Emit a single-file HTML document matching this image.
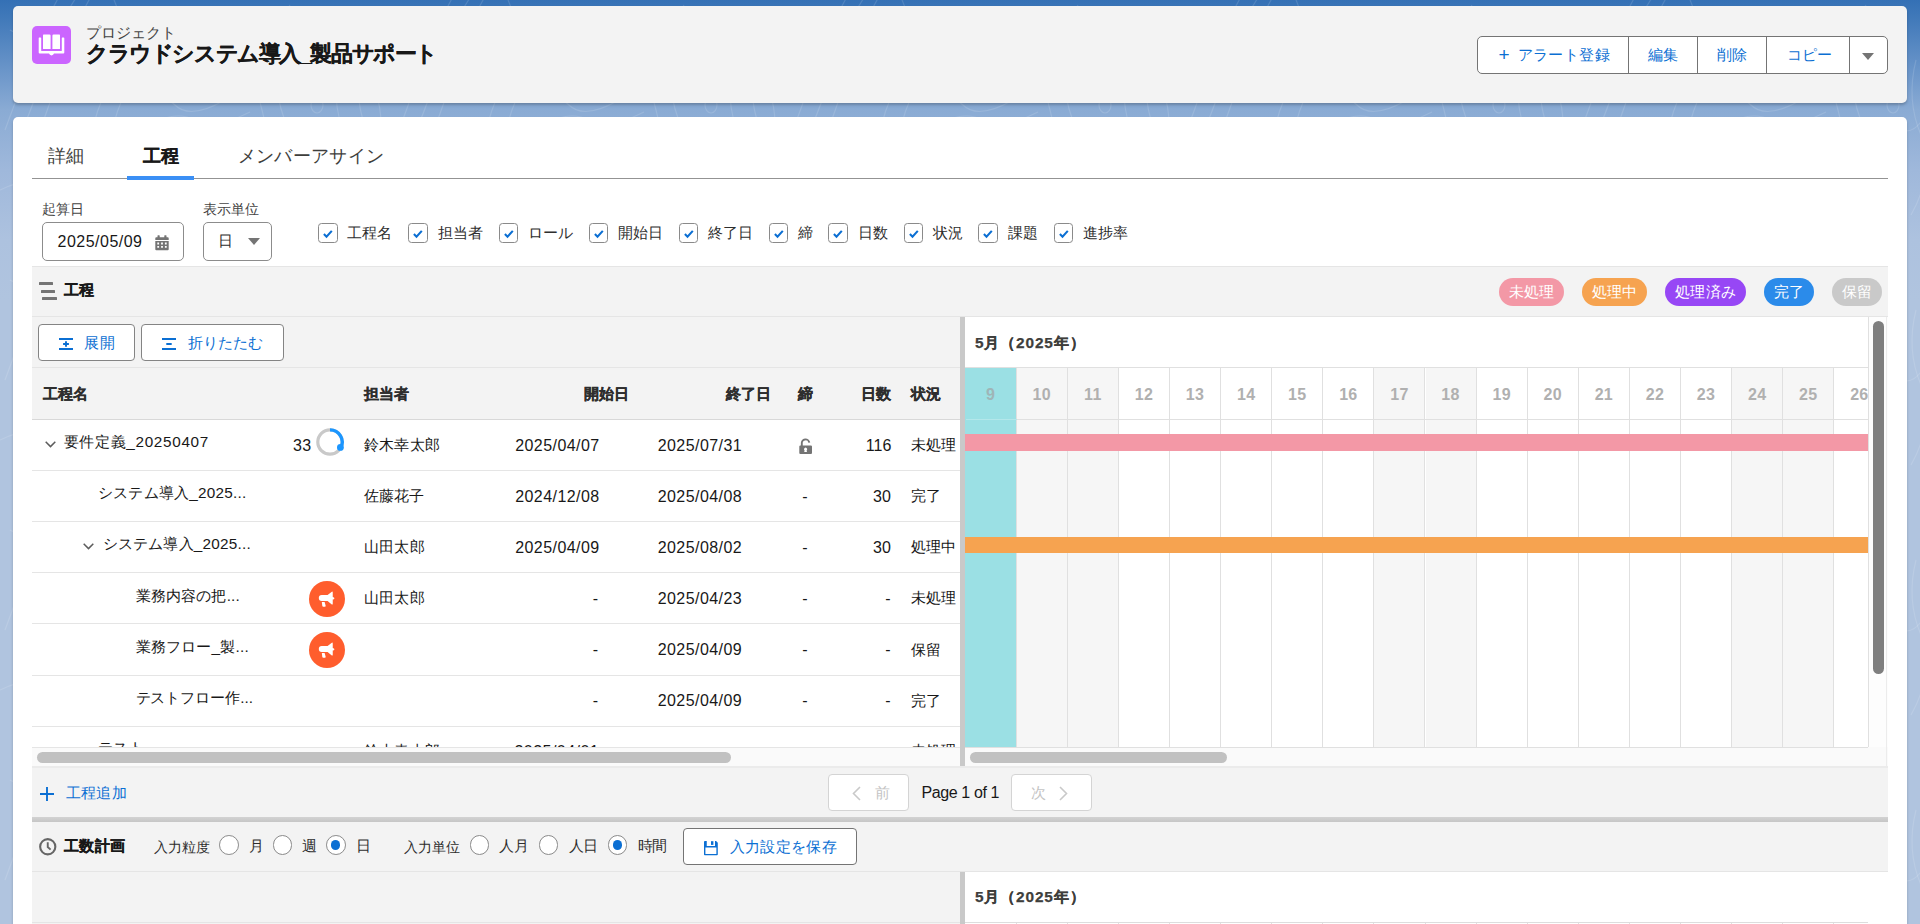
<!DOCTYPE html>
<html lang="ja">
<head>
<meta charset="utf-8">
<title>プロジェクト</title>
<style>
*{box-sizing:border-box;margin:0;padding:0}
html,body{width:1920px;height:924px;overflow:hidden}
body{font-family:"Liberation Sans",sans-serif;color:#181818;font-size:15px;position:relative;
background:linear-gradient(to bottom,#3470b5 0px,#427aba 20px,#6a95c9 70px,#8aabd4 110px,#9fb8db 170px,#adc2df 240px,#b0c4df 300px,#b0c4df 924px)}
.a{position:absolute}
.t{position:absolute;white-space:nowrap;line-height:1}
svg{position:absolute;overflow:visible}
</style>
</head>
<body>
<svg style="left:0;top:0" width="1920" height="924"><defs><pattern id="tp" width="394" height="250" patternUnits="userSpaceOnUse">
<g fill="none" stroke="#fff" stroke-opacity=".13" stroke-width="1.1">
<path d="M5 130Q20 90 30 60T60 -5M20 135Q38 95 46 62T78 -5M36 140Q52 100 62 64T92 -5"/>
<path d="M95 20Q120 60 100 105T135 180Q170 200 160 250M112 -5Q140 60 120 105T150 170"/>
<path d="M130 100Q160 90 175 105T225 100Q240 85 232 60M150 125Q175 110 195 120T250 112"/>
<path d="M262 20Q250 70 262 110T250 200M280 30Q270 80 284 118T270 210"/>
<ellipse cx="317" cy="105" rx="6" ry="8"/><path d="M300 130Q310 120 322 128T345 122"/>
<path d="M340 60Q330 100 345 135T335 215M360 40Q352 90 366 130T352 230M378 100Q386 130 372 170"/>
<path d="M180 150Q215 125 245 150T270 230M0 190Q40 170 70 195T130 215"/>
<path d="M200 30Q220 10 245 25T290 5M10 30Q35 45 60 30"/>
</g></pattern></defs><rect width="1920" height="924" fill="url(#tp)"/></svg>
<div class="a" style="left:13.2px;top:6px;width:1893.6px;height:96.5px;background:#f3f3f3;border-radius:5px;box-shadow:0 2px 3px rgba(0,0,0,.22);"></div>
<div class="a" style="left:13.2px;top:117.3px;width:1893.6px;height:820px;background:#fff;border-radius:5px;box-shadow:0 2px 3px rgba(0,0,0,.2);"></div>
<div class="a" style="left:32px;top:26px;width:39px;height:38px;background:#cb65ff;border-radius:5px;"></div>
<svg style="left:38px;top:34px" width="27" height="22" viewBox="0 0 27 22">
<path fill="#fff" d="M5 1.2Q5 .6 5.6 .6H11.4Q12.6 .6 12.6 1.8V15H5.6Q5 15 5 14.4Z"/>
<path fill="#fff" d="M14.4 1.8Q14.4 .6 15.6 .6H21.4Q22 .6 22 1.2V14.4Q22 15 21.4 15H14.4Z"/>
<path fill="#fff" d="M1.2 3.5H2.6Q3.2 3.5 3.2 4.1V16.4Q3.2 17 3.8 17H23.2Q23.8 17 23.8 16.4V4.1Q23.8 3.5 24.4 3.5H25.6Q26.3 3.5 26.3 4.2V18.6Q26.3 19.6 25.3 19.6H16Q15.4 21.4 13.5 21.4Q11.6 21.4 11 19.6H1.7Q.7 19.6 .7 18.6V4.2Q.7 3.5 1.2 3.5Z"/>
</svg>
<div class="t" style="top:25.9px;font-size:14.8px;left:86px;color:#444;letter-spacing:0.083px;">プロジェクト</div>
<div class="t" style="top:44.45px;font-size:21.5px;left:86px;font-weight:bold;-webkit-text-stroke:.25px;letter-spacing:-1.41px;">クラウドシステム導入_製品サポート</div>
<div class="a" style="left:1477px;top:36px;width:411px;height:37.5px;background:#fff;border:1px solid #747474;border-radius:5px;"></div>
<div class="a" style="left:1628px;top:37px;width:1px;height:35.5px;background:#747474;"></div>
<div class="a" style="left:1697px;top:37px;width:1px;height:35.5px;background:#747474;"></div>
<div class="a" style="left:1766px;top:37px;width:1px;height:35.5px;background:#747474;"></div>
<div class="a" style="left:1849px;top:37px;width:1px;height:35.5px;background:#747474;"></div>
<div class="t" style="top:44.7px;font-size:19px;left:1498.5px;color:#0b6fd3;">+</div>
<div class="t" style="top:47.05px;font-size:15.3px;left:1517.5px;color:#0b6fd3;letter-spacing:0.417px;">アラート登録</div>
<div class="t" style="top:47.05px;font-size:15.3px;left:1647.6px;color:#0b6fd3;letter-spacing:0.3px;">編集</div>
<div class="t" style="top:47.05px;font-size:15.3px;left:1716.8px;color:#0b6fd3;letter-spacing:0.4px;">削除</div>
<div class="t" style="top:47.05px;font-size:15.3px;left:1787px;color:#0b6fd3;letter-spacing:0.167px;">コピー</div>
<div class="a" style="left:1862px;top:53px;width:0;height:0;border-left:6.2px solid transparent;border-right:6.2px solid transparent;border-top:7px solid #747474"></div>
<div class="a" style="left:32px;top:178px;width:1856px;height:1px;background:#939393;"></div>
<div class="t" style="top:147.0px;font-size:18px;left:47.5px;color:#3e3e3c;letter-spacing:0.4px;">詳細</div>
<div class="t" style="top:147.0px;font-size:18px;left:142.5px;font-weight:bold;-webkit-text-stroke:.25px;letter-spacing:0.5px;">工程</div>
<div class="a" style="left:127.3px;top:176.1px;width:66.8px;height:3.8px;background:#3a8ff5;"></div>
<div class="t" style="top:146.5px;font-size:18px;left:237.5px;color:#3e3e3c;letter-spacing:0.375px;">メンバーアサイン</div>
<div class="t" style="top:201.5px;font-size:14px;left:42px;color:#444;">起算日</div>
<div class="t" style="top:201.5px;font-size:14px;left:202.5px;color:#444;letter-spacing:0.125px;">表示単位</div>
<div class="a" style="left:42px;top:222px;width:142px;height:38.5px;background:#fff;border:1px solid #8c8c8c;border-radius:5px;"></div>
<div class="t" style="top:234.3px;font-size:16px;left:57.5px;letter-spacing:0.492px;">2025/05/09</div>
<svg style="left:154.5px;top:234.8px" width="14" height="15.5" viewBox="0 0 14 15.5">
<path fill="#747474" d="M3 .3h1.2q.5 0 .5.5V2.2h4.6V.8q0-.5.5-.5H11q.5 0 .5.5V2.2h1.2q1 0 1 1V4.9H.3V3.2q0-1 1-1H2.5V.8q0-.5.5-.5Z"/>
<path fill="#747474" fill-rule="evenodd" d="M.3 6H13.7V14.2q0 1-1 1H1.3q-1 0-1-1ZM2.3 7.6V9.4H4.1V7.6ZM6.1 7.6V9.4H7.9V7.6ZM9.9 7.6V9.4H11.7V7.6ZM2.3 11V12.8H4.1V11ZM6.1 11V12.8H7.9V11ZM9.9 11V12.8H11.7V11Z"/>
</svg>
<div class="a" style="left:203px;top:222px;width:69px;height:38.5px;background:#fff;border:1px solid #8c8c8c;border-radius:5px;"></div>
<div class="t" style="top:233.0px;font-size:15px;left:218.3px;color:#2e2e2e;letter-spacing:-1.5px;">日</div>
<div class="a" style="left:247.7px;top:238px;width:0;height:0;border-left:6px solid transparent;border-right:6px solid transparent;border-top:7px solid #747474"></div>
<div class="a" style="left:318px;top:223.2px;width:19.5px;height:19.5px;background:#fff;border:1px solid #8a8a8a;border-radius:3.5px;"></div>
<svg style="left:322.9px;top:229.6px" width="9.6" height="8" viewBox="0 0 9.6 8"><path d="M.9 4.1 3.5 6.7 8.8 .9" fill="none" stroke="#0b6fd3" stroke-width="2.1"/></svg>
<div class="t" style="top:225.0px;font-size:15px;left:347px;color:#2e2e2e;letter-spacing:0.167px;">工程名</div>
<div class="a" style="left:408.2px;top:223.2px;width:19.5px;height:19.5px;background:#fff;border:1px solid #8a8a8a;border-radius:3.5px;"></div>
<svg style="left:413.09999999999997px;top:229.6px" width="9.6" height="8" viewBox="0 0 9.6 8"><path d="M.9 4.1 3.5 6.7 8.8 .9" fill="none" stroke="#0b6fd3" stroke-width="2.1"/></svg>
<div class="t" style="top:225.0px;font-size:15px;left:437.5px;color:#2e2e2e;letter-spacing:0.167px;">担当者</div>
<div class="a" style="left:498.7px;top:223.2px;width:19.5px;height:19.5px;background:#fff;border:1px solid #8a8a8a;border-radius:3.5px;"></div>
<svg style="left:503.59999999999997px;top:229.6px" width="9.6" height="8" viewBox="0 0 9.6 8"><path d="M.9 4.1 3.5 6.7 8.8 .9" fill="none" stroke="#0b6fd3" stroke-width="2.1"/></svg>
<div class="t" style="top:225.0px;font-size:15px;left:528px;color:#2e2e2e;letter-spacing:-0.167px;">ロール</div>
<div class="a" style="left:588.7px;top:223.2px;width:19.5px;height:19.5px;background:#fff;border:1px solid #8a8a8a;border-radius:3.5px;"></div>
<svg style="left:593.6px;top:229.6px" width="9.6" height="8" viewBox="0 0 9.6 8"><path d="M.9 4.1 3.5 6.7 8.8 .9" fill="none" stroke="#0b6fd3" stroke-width="2.1"/></svg>
<div class="t" style="top:225.0px;font-size:15px;left:617.5px;color:#2e2e2e;letter-spacing:0.167px;">開始日</div>
<div class="a" style="left:678.7px;top:223.2px;width:19.5px;height:19.5px;background:#fff;border:1px solid #8a8a8a;border-radius:3.5px;"></div>
<svg style="left:683.6px;top:229.6px" width="9.6" height="8" viewBox="0 0 9.6 8"><path d="M.9 4.1 3.5 6.7 8.8 .9" fill="none" stroke="#0b6fd3" stroke-width="2.1"/></svg>
<div class="t" style="top:225.0px;font-size:15px;left:707.5px;color:#2e2e2e;letter-spacing:0.167px;">終了日</div>
<div class="a" style="left:768.7px;top:223.2px;width:19.5px;height:19.5px;background:#fff;border:1px solid #8a8a8a;border-radius:3.5px;"></div>
<svg style="left:773.6px;top:229.6px" width="9.6" height="8" viewBox="0 0 9.6 8"><path d="M.9 4.1 3.5 6.7 8.8 .9" fill="none" stroke="#0b6fd3" stroke-width="2.1"/></svg>
<div class="t" style="top:225.0px;font-size:15px;left:798px;color:#2e2e2e;letter-spacing:0.2px;">締</div>
<div class="a" style="left:828.3px;top:223.2px;width:19.5px;height:19.5px;background:#fff;border:1px solid #8a8a8a;border-radius:3.5px;"></div>
<svg style="left:833.1999999999999px;top:229.6px" width="9.6" height="8" viewBox="0 0 9.6 8"><path d="M.9 4.1 3.5 6.7 8.8 .9" fill="none" stroke="#0b6fd3" stroke-width="2.1"/></svg>
<div class="t" style="top:225.0px;font-size:15px;left:858px;color:#2e2e2e;letter-spacing:0.15px;">日数</div>
<div class="a" style="left:903.7px;top:223.2px;width:19.5px;height:19.5px;background:#fff;border:1px solid #8a8a8a;border-radius:3.5px;"></div>
<svg style="left:908.6px;top:229.6px" width="9.6" height="8" viewBox="0 0 9.6 8"><path d="M.9 4.1 3.5 6.7 8.8 .9" fill="none" stroke="#0b6fd3" stroke-width="2.1"/></svg>
<div class="t" style="top:225.0px;font-size:15px;left:933px;color:#2e2e2e;letter-spacing:0.15px;">状況</div>
<div class="a" style="left:978px;top:223.2px;width:19.5px;height:19.5px;background:#fff;border:1px solid #8a8a8a;border-radius:3.5px;"></div>
<svg style="left:982.9px;top:229.6px" width="9.6" height="8" viewBox="0 0 9.6 8"><path d="M.9 4.1 3.5 6.7 8.8 .9" fill="none" stroke="#0b6fd3" stroke-width="2.1"/></svg>
<div class="t" style="top:225.0px;font-size:15px;left:1007.5px;color:#2e2e2e;letter-spacing:0.25px;">課題</div>
<div class="a" style="left:1053.7px;top:223.2px;width:19.5px;height:19.5px;background:#fff;border:1px solid #8a8a8a;border-radius:3.5px;"></div>
<svg style="left:1058.6000000000001px;top:229.6px" width="9.6" height="8" viewBox="0 0 9.6 8"><path d="M.9 4.1 3.5 6.7 8.8 .9" fill="none" stroke="#0b6fd3" stroke-width="2.1"/></svg>
<div class="t" style="top:225.0px;font-size:15px;left:1082.5px;color:#2e2e2e;letter-spacing:0.167px;">進捗率</div>
<div class="a" style="left:32px;top:266px;width:1856px;height:660px;background:#f3f3f3;"></div>
<div class="a" style="left:32px;top:266px;width:1856px;height:1px;background:#e5e5e5;"></div>
<div class="a" style="left:39.2px;top:282.1px;width:14.2px;height:3.2px;background:#747474;border-radius:0.5px;"></div>
<div class="a" style="left:40.9px;top:289.8px;width:14.1px;height:3.2px;background:#747474;border-radius:0.5px;"></div>
<div class="a" style="left:42px;top:296.9px;width:14.8px;height:3.2px;background:#747474;border-radius:0.5px;"></div>
<div class="t" style="top:282.4px;font-size:15.2px;left:64px;font-weight:bold;-webkit-text-stroke:.25px;letter-spacing:0.25px;">工程</div>
<div class="a" style="left:1498.5px;top:278px;width:65.5px;height:28px;background:#f398a6;border-radius:14px;"></div>
<div class="t" style="top:283.9px;font-size:15.2px;left:1508.5px;color:#fff;letter-spacing:0.267px;">未処理</div>
<div class="a" style="left:1581.5px;top:278px;width:65.5px;height:28px;background:#f6a350;border-radius:14px;"></div>
<div class="t" style="top:283.9px;font-size:15.2px;left:1591.5px;color:#fff;letter-spacing:0.267px;">処理中</div>
<div class="a" style="left:1665px;top:278px;width:80.5px;height:28px;background:#9747f5;border-radius:14px;"></div>
<div class="t" style="top:283.9px;font-size:15.2px;left:1675px;color:#fff;letter-spacing:0.25px;">処理済み</div>
<div class="a" style="left:1763.5px;top:278px;width:50px;height:28px;background:#2b8bea;border-radius:14px;"></div>
<div class="t" style="top:283.9px;font-size:15.2px;left:1773.5px;color:#fff;letter-spacing:0.25px;">完了</div>
<div class="a" style="left:1831.5px;top:278px;width:50px;height:28px;background:#c9c9c9;border-radius:14px;"></div>
<div class="t" style="top:283.9px;font-size:15.2px;left:1841.5px;color:#fff;letter-spacing:0.25px;">保留</div>
<div class="a" style="left:32px;top:316px;width:1856px;height:1px;background:#e5e5e5;"></div>
<div class="a" style="left:38px;top:324px;width:96.6px;height:36.6px;background:#fff;border:1px solid #848484;border-radius:4px;"></div>
<svg style="left:59.3px;top:338.1px" width="14" height="12" viewBox="0 0 14 12" fill="none" stroke="#0b6fd3" stroke-width="2">
<path d="M0 1H14M0 11H14"/><path d="M7 3.2V8.8M4.1 6H9.9" stroke-width="1.9"/></svg>
<div class="t" style="top:334.85px;font-size:15.3px;left:84px;color:#0b6fd3;letter-spacing:0.5px;">展開</div>
<div class="a" style="left:141px;top:324px;width:142.6px;height:36.6px;background:#fff;border:1px solid #848484;border-radius:4px;"></div>
<svg style="left:162px;top:338.1px" width="14" height="12" viewBox="0 0 14 12" fill="none" stroke="#0b6fd3" stroke-width="2">
<path d="M0 1H14M0 11H14M4.3 6H9.7"/></svg>
<div class="t" style="top:334.85px;font-size:15.3px;left:187.5px;color:#0b6fd3;letter-spacing:0.2px;">折りたたむ</div>
<div class="a" style="left:32px;top:367px;width:928px;height:1px;background:#e5e5e5;"></div>
<div class="a" style="left:32px;top:419px;width:928px;height:1px;background:#d8d8d8;"></div>
<div class="t" style="top:386.4px;font-size:15.2px;left:42.5px;font-weight:bold;-webkit-text-stroke:.25px;color:#2e2e2e;letter-spacing:0.167px;">工程名</div>
<div class="t" style="top:386.4px;font-size:15.2px;left:363.5px;font-weight:bold;-webkit-text-stroke:.25px;color:#2e2e2e;letter-spacing:0.267px;">担当者</div>
<div class="t" style="top:386.4px;font-size:15.2px;left:583.5px;font-weight:bold;-webkit-text-stroke:.25px;color:#2e2e2e;letter-spacing:0.167px;">開始日</div>
<div class="t" style="top:386.4px;font-size:15.2px;left:726px;font-weight:bold;-webkit-text-stroke:.25px;color:#2e2e2e;letter-spacing:0.167px;">終了日</div>
<div class="t" style="top:386.4px;font-size:15.2px;left:798px;font-weight:bold;-webkit-text-stroke:.25px;color:#2e2e2e;letter-spacing:0.3px;">締</div>
<div class="t" style="top:386.4px;font-size:15.2px;left:861px;font-weight:bold;-webkit-text-stroke:.25px;color:#2e2e2e;letter-spacing:0.15px;">日数</div>
<div class="t" style="top:386.4px;font-size:15.2px;left:910.5px;font-weight:bold;-webkit-text-stroke:.25px;color:#2e2e2e;letter-spacing:0.15px;">状況</div>
<div class="a" style="left:32px;top:420px;width:928px;height:327px;background:#fff;"></div>
<div class="a" style="left:32px;top:470.1px;width:928px;height:1px;background:#e5e5e5;"></div>
<div class="a" style="left:32px;top:520.9px;width:928px;height:1px;background:#e5e5e5;"></div>
<div class="a" style="left:32px;top:571.8px;width:928px;height:1px;background:#e5e5e5;"></div>
<div class="a" style="left:32px;top:622.9px;width:928px;height:1px;background:#e5e5e5;"></div>
<div class="a" style="left:32px;top:675.0px;width:928px;height:1px;background:#e5e5e5;"></div>
<div class="a" style="left:32px;top:725.9px;width:928px;height:1px;background:#e5e5e5;"></div>
<svg style="left:44.5px;top:440.5px" width="11" height="7" viewBox="0 0 11 7"><path d="M.7 .8 5.5 5.6 10.3 .8" fill="none" stroke="#5c5c5c" stroke-width="1.5"/></svg>
<div class="t" style="top:433.95px;font-size:15.3px;left:63.5px;letter-spacing:0.686px;">要件定義_20250407</div>
<div class="t" style="top:437.9px;font-size:16px;left:293px;letter-spacing:0.352px;">33</div>
<svg style="left:316.2px;top:428px" width="28" height="28" viewBox="0 0 28 28" fill="none">
<circle cx="14" cy="14" r="12.2" stroke="#c9c9c9" stroke-width="3.2"/>
<path d="M14 1.8A12.2 12.2 0 0 1 24.69 19.88" stroke="#1b96ff" stroke-width="3.3"/>
<circle cx="24.4" cy="19.4" r="3.4" fill="#1b96ff"/></svg>
<div class="t" style="top:437.35px;font-size:15.3px;left:363.5px;letter-spacing:0.4px;">鈴木幸太郎</div>
<div class="t" style="top:437.9px;font-size:16px;right:1320.3px;letter-spacing:.45px;">2025/04/07</div>
<div class="t" style="top:437.9px;font-size:16px;right:1177.8px;letter-spacing:.45px;">2025/07/31</div>
<svg style="left:799px;top:439px" width="13.5" height="15.5" viewBox="0 0 13.5 15.5">
<path d="M2.8 7V4.7A3.75 3.75 0 0 1 10.3 3.7" fill="none" stroke="#747474" stroke-width="1.9"/>
<path fill="#747474" fill-rule="evenodd" d="M1.4 6.5H11.9Q13 6.5 13 7.6V13.9Q13 15 11.9 15H1.4Q.3 15 .3 13.9V7.6Q.3 6.5 1.4 6.5ZM6.6 8.4A1.8 1.8 0 0 0 5.6 11.5L5.2 13H8L7.6 11.5A1.8 1.8 0 0 0 6.6 8.4Z"/></svg>
<div class="t" style="top:437.9px;font-size:16px;right:1028.7px;">116</div>
<div class="t" style="top:437.35px;font-size:15.3px;left:910.5px;letter-spacing:0.333px;">未処理</div>
<div class="t" style="top:484.95px;font-size:15.3px;left:98px;letter-spacing:0.229px;">システム導入_2025...</div>
<div class="t" style="top:488.15px;font-size:15.3px;left:363.5px;letter-spacing:0.25px;">佐藤花子</div>
<div class="t" style="top:488.7px;font-size:16px;right:1320.3px;letter-spacing:.45px;">2024/12/08</div>
<div class="t" style="top:488.7px;font-size:16px;right:1177.8px;letter-spacing:.45px;">2025/04/08</div>
<div class="t" style="top:488.7px;font-size:16px;left:802.3px;">-</div>
<div class="t" style="top:488.7px;font-size:16px;right:1028.7px;letter-spacing:.3px;">30</div>
<div class="t" style="top:488.15px;font-size:15.3px;left:910.5px;letter-spacing:0.25px;">完了</div>
<svg style="left:82.5px;top:542.5px" width="11" height="7" viewBox="0 0 11 7"><path d="M.7 .8 5.5 5.6 10.3 .8" fill="none" stroke="#5c5c5c" stroke-width="1.5"/></svg>
<div class="t" style="top:536.35px;font-size:15.3px;left:102.5px;letter-spacing:0.229px;">システム導入_2025...</div>
<div class="t" style="top:539.15px;font-size:15.3px;left:363.5px;letter-spacing:0.375px;">山田太郎</div>
<div class="t" style="top:539.7px;font-size:16px;right:1320.3px;letter-spacing:.45px;">2025/04/09</div>
<div class="t" style="top:539.7px;font-size:16px;right:1177.8px;letter-spacing:.45px;">2025/08/02</div>
<div class="t" style="top:539.7px;font-size:16px;left:802.3px;">-</div>
<div class="t" style="top:539.7px;font-size:16px;right:1028.7px;letter-spacing:.3px;">30</div>
<div class="t" style="top:539.15px;font-size:15.3px;left:910.5px;letter-spacing:0.333px;">処理中</div>
<div class="t" style="top:587.55px;font-size:15.3px;left:135.5px;letter-spacing:0.194px;">業務内容の把...</div>
<svg style="left:308.6px;top:580.6px" width="36" height="36" viewBox="0 0 36 36">
<circle cx="18" cy="18" r="18" fill="#ff5d2d"/>
<path fill="#fff" d="M12.7 14H18.6L22.5 10.9Q23.75 10.1 23.75 11.5V15.9Q25.4 16 25.4 17.25Q25.4 18.5 23.75 18.6V22.7Q23.75 24.1 22.5 23.2L18.6 19.9H12.7Q9.8 19.9 9.8 16.95Q9.8 14 12.7 14Z"/>
<path fill="#fff" d="M12.8 20.9H15.6L16.6 24.5Q16.9 25.7 15.8 25.7H14.3Q13.5 25.7 13.3 24.9Z"/></svg>
<div class="t" style="top:590.35px;font-size:15.3px;left:363.5px;letter-spacing:0.375px;">山田太郎</div>
<div class="t" style="top:590.9px;font-size:16px;left:592.7px;">-</div>
<div class="t" style="top:590.9px;font-size:16px;right:1177.8px;letter-spacing:.45px;">2025/04/23</div>
<div class="t" style="top:590.9px;font-size:16px;left:802.3px;">-</div>
<div class="t" style="top:590.9px;font-size:16px;left:885.3px;">-</div>
<div class="t" style="top:590.35px;font-size:15.3px;left:910.5px;letter-spacing:0.333px;">未処理</div>
<div class="t" style="top:638.65px;font-size:15.3px;left:135.5px;letter-spacing:0.223px;">業務フロー_製...</div>
<svg style="left:308.6px;top:631.7px" width="36" height="36" viewBox="0 0 36 36">
<circle cx="18" cy="18" r="18" fill="#ff5d2d"/>
<path fill="#fff" d="M12.7 14H18.6L22.5 10.9Q23.75 10.1 23.75 11.5V15.9Q25.4 16 25.4 17.25Q25.4 18.5 23.75 18.6V22.7Q23.75 24.1 22.5 23.2L18.6 19.9H12.7Q9.8 19.9 9.8 16.95Q9.8 14 12.7 14Z"/>
<path fill="#fff" d="M12.8 20.9H15.6L16.6 24.5Q16.9 25.7 15.8 25.7H14.3Q13.5 25.7 13.3 24.9Z"/></svg>
<div class="t" style="top:642.1px;font-size:16px;left:592.7px;">-</div>
<div class="t" style="top:642.1px;font-size:16px;right:1177.8px;letter-spacing:.45px;">2025/04/09</div>
<div class="t" style="top:642.1px;font-size:16px;left:802.3px;">-</div>
<div class="t" style="top:642.1px;font-size:16px;left:885.3px;">-</div>
<div class="t" style="top:641.55px;font-size:15.3px;left:910.5px;letter-spacing:0.25px;">保留</div>
<div class="t" style="top:689.85px;font-size:15.3px;left:135.5px;letter-spacing:-0.025px;">テストフロー作...</div>
<div class="t" style="top:693.2px;font-size:16px;left:592.7px;">-</div>
<div class="t" style="top:693.2px;font-size:16px;right:1177.8px;letter-spacing:.45px;">2025/04/09</div>
<div class="t" style="top:693.2px;font-size:16px;left:802.3px;">-</div>
<div class="t" style="top:693.2px;font-size:16px;left:885.3px;">-</div>
<div class="t" style="top:692.65px;font-size:15.3px;left:910.5px;letter-spacing:0.25px;">完了</div>
<div class="a" style="left:32px;top:726.5px;width:928px;height:20.5px;overflow:hidden">
<div class="t" style="top:13.95px;font-size:15.3px;left:66px;letter-spacing:0.333px;">テスト</div>
<div class="t" style="top:16.85px;font-size:15.3px;left:331.5px;letter-spacing:0.4px;">鈴木幸太郎</div>
<div class="t" style="top:17.5px;font-size:16px;left:567.3px;left:482.5px;right:auto;letter-spacing:.45px;">2025/04/01</div>
<div class="t" style="top:16.85px;font-size:15.3px;left:878.5px;letter-spacing:0.333px;">未処理</div>
</div>
<div class="a" style="left:32px;top:747px;width:928px;height:19.5px;background:#fafafa;"></div>
<div class="a" style="left:32px;top:747px;width:928px;height:1px;background:#e5e5e5;"></div>
<div class="a" style="left:36.5px;top:752px;width:694.5px;height:11px;background:#c1c1c1;border-radius:5.5px;"></div>
<div class="a" style="left:960px;top:316.5px;width:5px;height:450px;background:#c9c9c9;"></div>
<div class="a" style="left:965px;top:317px;width:923px;height:449.5px;background:#fff;"></div>
<div class="a" style="left:1868px;top:317px;width:20px;height:449.5px;background:#fdfdfd;"></div>
<div class="a" style="left:965px;top:747px;width:923px;height:19.5px;background:#fafafa;"></div>
<div class="a" style="left:1886.2px;top:317px;width:1.3px;height:449.5px;background:#ececec;"></div>
<div class="t" style="top:334.8px;font-size:15.4px;left:975px;font-weight:bold;-webkit-text-stroke:.25px;color:#3e3e3c;letter-spacing:0.854px;">5月（2025年）</div>
<div class="a" style="left:965px;top:367px;width:903px;height:1px;background:#e0e0e0;"></div>
<div class="a" style="left:965px;top:368px;width:903px;height:379px;overflow:hidden">
<div class="a" style="left:0.6px;top:0;width:51.1px;height:379px;background:#9be0e4;border-right:1px solid #e0e0e0"></div>
<div class="a" style="left:51.7px;top:0;width:51.1px;height:379px;background:#f6f6f6;border-right:1px solid #e0e0e0"></div>
<div class="a" style="left:102.8px;top:0;width:51.1px;height:379px;background:#f6f6f6;border-right:1px solid #e0e0e0"></div>
<div class="a" style="left:153.9px;top:0;width:51.1px;height:379px;background:#fff;border-right:1px solid #e0e0e0"></div>
<div class="a" style="left:205.0px;top:0;width:51.1px;height:379px;background:#fff;border-right:1px solid #e0e0e0"></div>
<div class="a" style="left:256.1px;top:0;width:51.1px;height:379px;background:#fff;border-right:1px solid #e0e0e0"></div>
<div class="a" style="left:307.2px;top:0;width:51.1px;height:379px;background:#fff;border-right:1px solid #e0e0e0"></div>
<div class="a" style="left:358.3px;top:0;width:51.1px;height:379px;background:#fff;border-right:1px solid #e0e0e0"></div>
<div class="a" style="left:409.4px;top:0;width:51.1px;height:379px;background:#f6f6f6;border-right:1px solid #e0e0e0"></div>
<div class="a" style="left:460.5px;top:0;width:51.1px;height:379px;background:#f6f6f6;border-right:1px solid #e0e0e0"></div>
<div class="a" style="left:511.6px;top:0;width:51.1px;height:379px;background:#fff;border-right:1px solid #e0e0e0"></div>
<div class="a" style="left:562.7px;top:0;width:51.1px;height:379px;background:#fff;border-right:1px solid #e0e0e0"></div>
<div class="a" style="left:613.8px;top:0;width:51.1px;height:379px;background:#fff;border-right:1px solid #e0e0e0"></div>
<div class="a" style="left:664.9px;top:0;width:51.1px;height:379px;background:#fff;border-right:1px solid #e0e0e0"></div>
<div class="a" style="left:716.0px;top:0;width:51.1px;height:379px;background:#fff;border-right:1px solid #e0e0e0"></div>
<div class="a" style="left:767.1px;top:0;width:51.1px;height:379px;background:#f6f6f6;border-right:1px solid #e0e0e0"></div>
<div class="a" style="left:818.2px;top:0;width:51.1px;height:379px;background:#f6f6f6;border-right:1px solid #e0e0e0"></div>
<div class="a" style="left:869.3px;top:0;width:51.1px;height:379px;background:#fff;border-right:1px solid #e0e0e0"></div>
<div class="a" style="left:0;top:51px;width:51.7px;height:1px;background:#b4e7ea"></div><div class="a" style="left:51.7px;top:51px;width:900px;height:1px;background:#e0e0e0"></div>
<div class="a" style="left:0;top:0;width:.6px;height:379px;background:#9be0e4"></div>
<div class="t" style="left:25.65px;top:19.1px;transform:translateX(-50%);font-size:16px;font-weight:bold;color:#9fb5b7;letter-spacing:.3px">9</div>
<div class="t" style="left:76.75px;top:19.1px;transform:translateX(-50%);font-size:16px;font-weight:bold;color:#b0b0b0;letter-spacing:.3px">10</div>
<div class="t" style="left:127.85px;top:19.1px;transform:translateX(-50%);font-size:16px;font-weight:bold;color:#b0b0b0;letter-spacing:.3px">11</div>
<div class="t" style="left:178.95px;top:19.1px;transform:translateX(-50%);font-size:16px;font-weight:bold;color:#b0b0b0;letter-spacing:.3px">12</div>
<div class="t" style="left:230.05px;top:19.1px;transform:translateX(-50%);font-size:16px;font-weight:bold;color:#b0b0b0;letter-spacing:.3px">13</div>
<div class="t" style="left:281.15px;top:19.1px;transform:translateX(-50%);font-size:16px;font-weight:bold;color:#b0b0b0;letter-spacing:.3px">14</div>
<div class="t" style="left:332.25px;top:19.1px;transform:translateX(-50%);font-size:16px;font-weight:bold;color:#b0b0b0;letter-spacing:.3px">15</div>
<div class="t" style="left:383.35px;top:19.1px;transform:translateX(-50%);font-size:16px;font-weight:bold;color:#b0b0b0;letter-spacing:.3px">16</div>
<div class="t" style="left:434.45px;top:19.1px;transform:translateX(-50%);font-size:16px;font-weight:bold;color:#b0b0b0;letter-spacing:.3px">17</div>
<div class="t" style="left:485.55px;top:19.1px;transform:translateX(-50%);font-size:16px;font-weight:bold;color:#b0b0b0;letter-spacing:.3px">18</div>
<div class="t" style="left:536.65px;top:19.1px;transform:translateX(-50%);font-size:16px;font-weight:bold;color:#b0b0b0;letter-spacing:.3px">19</div>
<div class="t" style="left:587.75px;top:19.1px;transform:translateX(-50%);font-size:16px;font-weight:bold;color:#b0b0b0;letter-spacing:.3px">20</div>
<div class="t" style="left:638.85px;top:19.1px;transform:translateX(-50%);font-size:16px;font-weight:bold;color:#b0b0b0;letter-spacing:.3px">21</div>
<div class="t" style="left:689.95px;top:19.1px;transform:translateX(-50%);font-size:16px;font-weight:bold;color:#b0b0b0;letter-spacing:.3px">22</div>
<div class="t" style="left:741.05px;top:19.1px;transform:translateX(-50%);font-size:16px;font-weight:bold;color:#b0b0b0;letter-spacing:.3px">23</div>
<div class="t" style="left:792.15px;top:19.1px;transform:translateX(-50%);font-size:16px;font-weight:bold;color:#b0b0b0;letter-spacing:.3px">24</div>
<div class="t" style="left:843.25px;top:19.1px;transform:translateX(-50%);font-size:16px;font-weight:bold;color:#b0b0b0;letter-spacing:.3px">25</div>
<div class="t" style="left:894.35px;top:19.1px;transform:translateX(-50%);font-size:16px;font-weight:bold;color:#b0b0b0;letter-spacing:.3px">26</div>
<div class="a" style="left:0;top:66px;width:903px;height:17px;background:#f398a6"></div>
<div class="a" style="left:0;top:169px;width:903px;height:15.8px;background:#f6a350"></div>
</div>
<div class="a" style="left:1868px;top:317px;width:1px;height:430px;background:#e0e0e0;"></div>
<div class="a" style="left:965px;top:747px;width:903px;height:1px;background:#e0e0e0;"></div>
<div class="a" style="left:1873px;top:321px;width:11px;height:352.5px;background:#7f7f7f;border-radius:5.5px;"></div>
<div class="a" style="left:969.5px;top:752px;width:257px;height:11px;background:#c1c1c1;border-radius:5.5px;"></div>
<div class="a" style="left:32px;top:766px;width:1856px;height:1.5px;background:#ebebeb;"></div>
<svg style="left:40px;top:786.5px" width="14" height="14" viewBox="0 0 14 14"><path d="M7 0V14M0 7H14" stroke="#0b6fd3" stroke-width="1.9" fill="none"/></svg>
<div class="t" style="top:785.35px;font-size:15.3px;left:65.5px;color:#0b6fd3;letter-spacing:0.375px;">工程追加</div>
<div class="a" style="left:828.3px;top:774px;width:80.4px;height:36.6px;background:#fff;border:1px solid #d4d4d4;border-radius:4px;"></div>
<svg style="left:852px;top:786px" width="9" height="15" viewBox="0 0 9 15"><path d="M8 1 1.5 7.5 8 14" fill="none" stroke="#c9c9c9" stroke-width="1.6"/></svg>
<div class="t" style="top:785.35px;font-size:15.3px;left:874.5px;color:#c4c4c4;letter-spacing:0.3px;">前</div>
<div class="t" style="top:785.0px;font-size:16px;left:921.5px;letter-spacing:-0.395px;">Page 1 of 1</div>
<div class="a" style="left:1011px;top:774px;width:80.6px;height:36.6px;background:#fff;border:1px solid #d4d4d4;border-radius:4px;"></div>
<div class="t" style="top:785.35px;font-size:15.3px;left:1030.5px;color:#c4c4c4;letter-spacing:0.3px;">次</div>
<svg style="left:1059px;top:786px" width="9" height="15" viewBox="0 0 9 15"><path d="M1 1 7.5 7.5 1 14" fill="none" stroke="#c9c9c9" stroke-width="1.6"/></svg>
<div class="a" style="left:32px;top:817.2px;width:1856px;height:4.4px;background:#c9c9c9;background:linear-gradient(#d2d2d2,#c6c6c6);"></div>
<svg style="left:39px;top:837.5px" width="17.5" height="17.5" viewBox="0 0 17.5 17.5" fill="none" stroke="#666">
<circle cx="8.75" cy="8.75" r="7.6" stroke-width="2.1"/><path d="M8.75 4.3V9L11.6 11.6" stroke-width="1.9"/></svg>
<div class="t" style="top:838.35px;font-size:15.3px;left:64px;font-weight:bold;-webkit-text-stroke:.25px;letter-spacing:0.375px;">工数計画</div>
<div class="t" style="top:840.0px;font-size:14px;left:153.5px;color:#2e2e2e;">入力粒度</div>
<div class="a" style="left:219.1px;top:835.1px;width:19.8px;height:19.8px;background:#fff;border:1px solid #8a8a8a;border-radius:9.9px;"></div>
<div class="t" style="top:838.0px;font-size:15px;left:248.5px;color:#2e2e2e;letter-spacing:-1.5px;">月</div>
<div class="a" style="left:272.6px;top:835.1px;width:19.8px;height:19.8px;background:#fff;border:1px solid #8a8a8a;border-radius:9.9px;"></div>
<div class="t" style="top:838.0px;font-size:15px;left:301.5px;color:#2e2e2e;letter-spacing:0.2px;">週</div>
<div class="a" style="left:325.8px;top:835.1px;width:19.8px;height:19.8px;background:#fff;border:1px solid #8a8a8a;border-radius:9.9px;"></div>
<div class="a" style="left:330.9px;top:840.2px;width:9.6px;height:9.6px;background:#0b6fd3;border-radius:4.8px;"></div>
<div class="t" style="top:838.0px;font-size:15px;left:356px;color:#2e2e2e;letter-spacing:-2.0px;">日</div>
<div class="t" style="top:840.0px;font-size:14px;left:404px;color:#2e2e2e;letter-spacing:0.075px;">入力単位</div>
<div class="a" style="left:469.6px;top:835.1px;width:19.8px;height:19.8px;background:#fff;border:1px solid #8a8a8a;border-radius:9.9px;"></div>
<div class="t" style="top:838.0px;font-size:15px;left:499px;color:#2e2e2e;letter-spacing:-0.1px;">人月</div>
<div class="a" style="left:538.6px;top:835.1px;width:19.8px;height:19.8px;background:#fff;border:1px solid #8a8a8a;border-radius:9.9px;"></div>
<div class="t" style="top:838.0px;font-size:15px;left:568.5px;color:#2e2e2e;letter-spacing:-0.35px;">人日</div>
<div class="a" style="left:607.6px;top:835.1px;width:19.8px;height:19.8px;background:#fff;border:1px solid #8a8a8a;border-radius:9.9px;"></div>
<div class="a" style="left:612.7px;top:840.2px;width:9.6px;height:9.6px;background:#0b6fd3;border-radius:4.8px;"></div>
<div class="t" style="top:838.0px;font-size:15px;left:637.5px;color:#2e2e2e;letter-spacing:-0.25px;">時間</div>
<div class="a" style="left:683px;top:828px;width:173.7px;height:36.7px;background:#fff;border:1px solid #747474;border-radius:4px;"></div>
<svg style="left:704.2px;top:840.9px" width="13.8" height="14.2" viewBox="0 0 13.8 14.2">
<path fill="#0b6fd3" fill-rule="evenodd" d="M.9 0H2.75V5H11V0H12.1L13.8 1.7V13.4Q13.8 14.2 13 14.2H.8Q0 14.2 0 13.4V.9Q0 0 .9 0ZM1.4 6.6V12.9H12.4V6.6Z"/>
<rect x="7" y=".2" width="2.4" height="3.7" fill="#0b6fd3"/></svg>
<div class="t" style="top:838.85px;font-size:15.3px;left:729.5px;color:#0b6fd3;letter-spacing:0.357px;">入力設定を保存</div>
<div class="a" style="left:32px;top:871px;width:1856px;height:1px;background:#e5e5e5;"></div>
<div class="a" style="left:960px;top:871.5px;width:5px;height:60px;background:#c9c9c9;"></div>
<div class="a" style="left:965px;top:872px;width:923px;height:50.5px;background:#fff;"></div>
<div class="t" style="top:889.3px;font-size:15.4px;left:975px;font-weight:bold;-webkit-text-stroke:.25px;color:#3e3e3c;letter-spacing:0.854px;">5月（2025年）</div>
<div class="a" style="left:32px;top:922.2px;width:928px;height:1px;background:#e5e5e5;"></div>
<div class="a" style="left:965px;top:922.2px;width:903px;height:1px;background:#ddd;"></div>
<div class="a" style="left:965px;top:923.2px;width:923px;height:2px;background:#fff;"></div>
<div class="a" style="left:1015.7px;top:923.2px;width:1px;height:2px;background:#e0e0e0;"></div>
<div class="a" style="left:1066.8px;top:923.2px;width:1px;height:2px;background:#e0e0e0;"></div>
<div class="a" style="left:1117.9px;top:923.2px;width:1px;height:2px;background:#e0e0e0;"></div>
<div class="a" style="left:1169.0px;top:923.2px;width:1px;height:2px;background:#e0e0e0;"></div>
<div class="a" style="left:1220.1px;top:923.2px;width:1px;height:2px;background:#e0e0e0;"></div>
<div class="a" style="left:1271.2px;top:923.2px;width:1px;height:2px;background:#e0e0e0;"></div>
<div class="a" style="left:1322.3px;top:923.2px;width:1px;height:2px;background:#e0e0e0;"></div>
<div class="a" style="left:1373.4px;top:923.2px;width:1px;height:2px;background:#e0e0e0;"></div>
<div class="a" style="left:1424.5px;top:923.2px;width:1px;height:2px;background:#e0e0e0;"></div>
<div class="a" style="left:1475.6px;top:923.2px;width:1px;height:2px;background:#e0e0e0;"></div>
<div class="a" style="left:1526.7px;top:923.2px;width:1px;height:2px;background:#e0e0e0;"></div>
<div class="a" style="left:1577.8px;top:923.2px;width:1px;height:2px;background:#e0e0e0;"></div>
<div class="a" style="left:1628.9px;top:923.2px;width:1px;height:2px;background:#e0e0e0;"></div>
<div class="a" style="left:1680.0px;top:923.2px;width:1px;height:2px;background:#e0e0e0;"></div>
<div class="a" style="left:1731.1px;top:923.2px;width:1px;height:2px;background:#e0e0e0;"></div>
<div class="a" style="left:1782.2px;top:923.2px;width:1px;height:2px;background:#e0e0e0;"></div>
<div class="a" style="left:1833.3px;top:923.2px;width:1px;height:2px;background:#e0e0e0;"></div>
</body>
</html>
